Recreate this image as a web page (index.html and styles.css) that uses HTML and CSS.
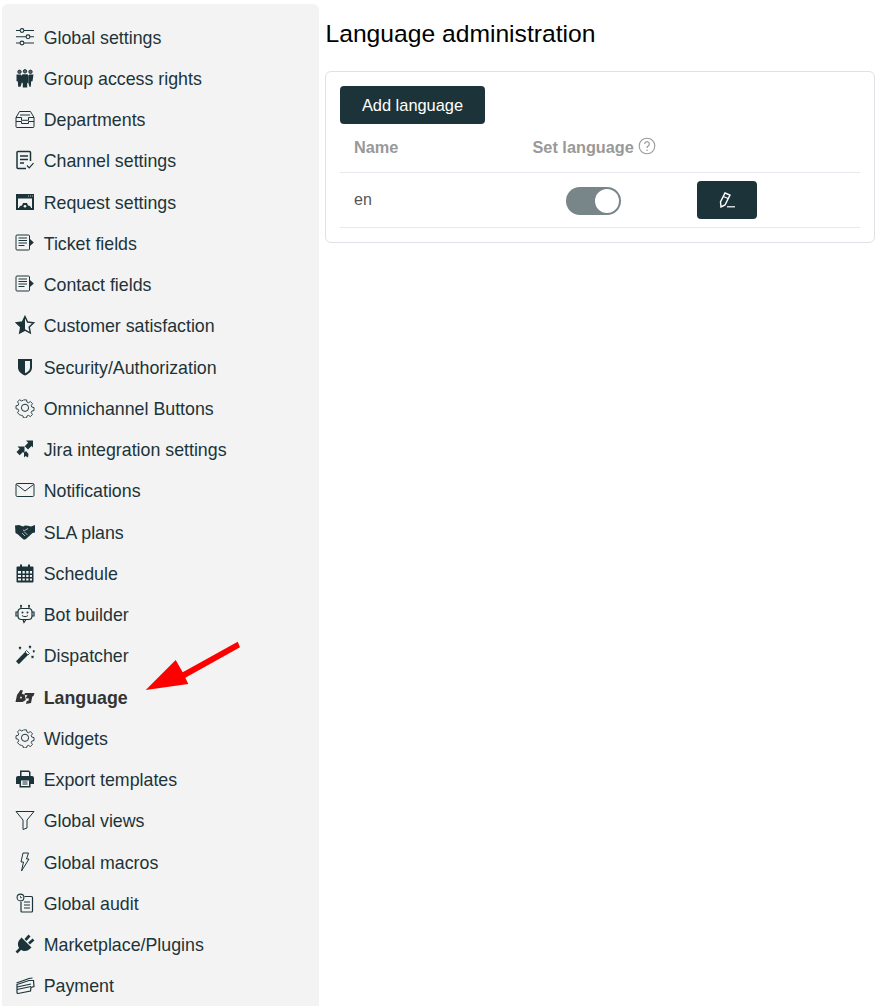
FILE: index.html
```html
<!doctype html>
<html>
<head>
    <meta charset="utf-8">
    <title>Language administration</title>
    <link rel="stylesheet" href="styles.css">
</head>
<body>
    <svg class="defs" width="0" height="0">
        <symbol id="i-sliders" viewBox="0 0 20 20">
            <path d="M1 3.500h4M9 3.500h10M1 9.800h10M15 9.800h4M1 16h4M9 16h10" fill="none" stroke="currentColor" stroke-width="1.100"/>
            <circle cx="7" cy="3.500" r="1.900" fill="none" stroke="currentColor" stroke-width="1.100"/>
            <circle cx="13" cy="9.800" r="1.900" fill="none" stroke="currentColor" stroke-width="1.100"/>
            <circle cx="7" cy="16" r="1.900" fill="none" stroke="currentColor" stroke-width="1.100"/>
        </symbol>
        <symbol id="i-group" viewBox="0 0 20 20">
            <circle cx="4.500" cy="3.800" r="1.700" fill="#56686c" stroke="currentColor"/>
            <circle cx="10" cy="3.300" r="1.700" fill="#56686c" stroke="currentColor"/>
            <circle cx="15.500" cy="3.800" r="1.700" fill="#56686c" stroke="currentColor"/>
            <path d="M1.500 6.500h4.200l1 1.500v7l-1.200 3.700H3.200l-.4-5.500H1.500zM18.500 6.500h-4.200l-1 1.500v7l1.200 3.700h1.300l.4-5.500h1.300zM7.500 6.300h5l1 1.500v6.500l-1.300 1v4.200H7.800v-4.200l-1.300-1V7.800z" fill="currentColor"/>
        </symbol>
        <symbol id="i-inbox" viewBox="0 0 20 20">
            <path d="M4.500 2.500h11l3.500 6v9a1 1 0 0 1-1 1H2a1 1 0 0 1-1-1v-9zM1 8.500h5.500v2.800h7V8.500H19M1 12.500h5.500v2h7v-2H19M5 6h10" fill="none" stroke="currentColor" stroke-width="1"/>
        </symbol>
        <symbol id="i-check-doc" viewBox="0 0 20 20">
            <path d="M11 18.500H3a1 1 0 0 1-1-1V2.500a1 1 0 0 1 1-1h11.500a1 1 0 0 1 1 1V11" fill="none" stroke="currentColor" stroke-width="1.500"/>
            <path d="M5 6h8M5 9.500h8M5 13h4" fill="none" stroke="currentColor" stroke-width="1.300"/>
            <path d="M12 15.500l2.200 2.300 4.300-4.600" fill="none" stroke="currentColor" stroke-width="1.200"/>
        </symbol>
        <symbol id="i-request" viewBox="0 0 20 20">
            <path fill-rule="evenodd" d="M1 2h18v16H1zM3 6.500v9.500h14V6.500z" fill="currentColor"/>
            <path d="M3.500 16.500l1.500-2.500 2-.5 1-2.500h4l1 2.500 2 .5 1.500 2.500z" fill="currentColor"/>
            <circle cx="10" cy="14.300" r="1.300" fill="#f3f3f3"/>
            <path d="M13 4h1M15 4h1M17 4h.8" stroke="#f3f3f3" stroke-width=".8"/>
        </symbol>
        <symbol id="i-fields" viewBox="0 0 20 20">
            <path d="M14.500 16V3a1 1 0 0 0-1-1H2a1 1 0 0 0-1 1v13a1 1 0 0 0 1 1h11.500a1 1 0 0 0 1-1z" fill="none" stroke="currentColor" stroke-width="1"/>
            <path d="M3.500 5h8.500M3.500 7.500h8.500M3.500 10h8.500M3.500 12.500h6" fill="none" stroke="currentColor" stroke-width="1.100"/>
            <path d="M15 6l3.800 3.500L15 13z" fill="currentColor"/>
        </symbol>
        <symbol id="i-star" viewBox="0 0 20 20">
            <path d="M10 1.500l2.600 5.500 6 .8-4.400 4.200 1.100 6L10 15.100 4.700 18l1.100-6-4.400-4.200 6-.8z" fill="none" stroke="currentColor" stroke-width="1.400"/>
            <path d="M10 1.500v13.600L4.700 18l1.100-6-4.400-4.200 6-.8z" fill="currentColor"/>
        </symbol>
        <symbol id="i-shield" viewBox="0 0 20 20">
            <path d="M3 2h14v8.500c0 4-3.500 6.500-7 8-3.500-1.500-7-4-7-8z" fill="currentColor"/>
            <path d="M10 4h5v6.500c0 2.800-2.300 4.600-5 5.800z" fill="#f3f3f3"/>
        </symbol>
        <symbol id="i-gear" viewBox="0 0 20 20">
            <path d="M8.300 1h3.400l.5 2.500 1.700.7 2.100-1.400 2.300 2.400-1.400 2.100.7 1.700 2.400.5v3.400l-2.400.5-.7 1.700 1.400 2.100-2.300 2.400-2.100-1.400-1.700.7-.5 2.100H8.300l-.5-2.100-1.700-.7L4 17.600l-2.300-2.400 1.400-2.100-.7-1.700L0 10.900V7.500l2.400-.5.700-1.700-1.400-2.100L4 .8l2.100 1.400 1.700-.7z" transform="translate(1 1) scale(.9)" fill="none" stroke="currentColor" stroke-width="1"/>
            <circle cx="10" cy="9.800" r="3.600" fill="none" stroke="currentColor" stroke-width="1"/>
        </symbol>
        <symbol id="i-jira" viewBox="0 0 20 20">
            <path d="M18 1.500h-7l2.200 2.200-3.500 3.500 3.300 3.300 3.500-3.500 1.500 1.500zM9.500 7.500h-7l2.200 2.200-3.200 3.300 3.200 3.200 3.300-3.300 1.500 1.500zM11 12l-2 2v4.500l1.500-1.500 2.500 1.500.5-3.500z" fill="currentColor"/>
        </symbol>
        <symbol id="i-mail" viewBox="0 0 20 20">
            <rect x="1" y="3.500" width="18" height="13" rx="1.200" fill="none" stroke="currentColor" stroke-width="1"/>
            <path d="M1.500 4.500L10 11l8.500-6.500" fill="none" stroke="currentColor" stroke-width="1"/>
        </symbol>
        <symbol id="i-hands" viewBox="0 0 20 20">
            <path d="M0 3.500l4-.5 4 1.500L10 3.500l3 .2 3 .8 4-1.500v7.500l-2.500.5-6.500 6-2 .8-2-1.500L3 12.500.5 11z" fill="currentColor"/>
            <path d="M13 6.500L9.500 8.500l-1.500-.5M7 11l3 3M9 9.500l3.500 3.500" fill="none" stroke="#f3f3f3" stroke-width=".7"/>
        </symbol>
        <symbol id="i-calendar" viewBox="0 0 20 20">
            <path fill-rule="evenodd" d="M2.500 3.500H5V1.500h2v2h6v-2h2v2h2.500a1 1 0 0 1 1 1v14a1 1 0 0 1-1 1h-15a1 1 0 0 1-1-1v-14a1 1 0 0 1 1-1zM3 8v2.500h3V8zm4.500 0v2.500h2.300V8zm3.700 0v2.500h2.300V8zm3.700 0v2.500H17V8zM3 12v2h3v-2zm4.500 0v2h2.300v-2zm3.700 0v2h2.300v-2zm3.700 0v2H17v-2zM3 15.500V17.500h3v-2zm4.500 0v2h2.300v-2zm3.700 0v2h2.300v-2zm3.700 0v2H17v-2z" fill="currentColor"/>
        </symbol>
        <symbol id="i-bot" viewBox="0 0 20 20">
            <rect x="3" y="4.500" width="14" height="11" rx="3.500" fill="none" stroke="currentColor" stroke-width="1.200"/>
            <path d="M6 4.500V2M14 4.500V2M3 8H1v4h2M17 8h2v4h-2M8 15.500l1 3 2-3" fill="none" stroke="currentColor" stroke-width="1.200"/>
            <circle cx="7.500" cy="8.500" r="1" fill="currentColor"/>
            <circle cx="12.500" cy="8.500" r="1" fill="currentColor"/>
            <circle cx="6" cy="1.800" r="1" fill="currentColor"/>
            <circle cx="14" cy="1.800" r="1" fill="currentColor"/>
            <path d="M7 11.500c1.500 1.500 4.500 1.500 6 0" fill="none" stroke="currentColor"/>
        </symbol>
        <symbol id="i-wand" viewBox="0 0 20 20">
            <path d="M1 16.300L11.500 5.500 14.500 8.500 3.800 19.300z" fill="currentColor"/>
            <path d="M11.500 5.500L14.500 8.500 13 10 10 7z" fill="#f3f3f3" stroke="currentColor" stroke-width=".8"/>
            <path d="M4 2l2 2M6 2L4 4M14 1l2 2M16 1l-2 2M16.500 11l2 2M18.500 11l-2 2M18 5.500l1.500 1.500M19.500 5.500L18 7" fill="none" stroke="currentColor" stroke-width="1.100"/>
        </symbol>
        <symbol id="i-sign" viewBox="0 0 20 20">
            <path d="M.5 15l1.500-7L5.500 3l2.500.5-1.200 3 3 1.500 1 5-3.300 2z" fill="currentColor"/>
            <path d="M5 10l1.300-.4.700 1.400-1.300.8z" fill="#f3f3f3"/>
            <path d="M10 6h9.500l-1 3-1.200.5-1.300 6.500-5 1 .8-3 1.700-.3.400-2.200-3.400-.3 2-3-3.300-.2z" fill="currentColor"/>
        </symbol>
        <symbol id="i-printer" viewBox="0 0 20 20">
            <path fill-rule="evenodd" d="M5 7V1.500h9L15.500 3v4H17a2 2 0 0 1 2 2v6h-3.500v3.500h-11V15H1V9a2 2 0 0 1 2-2zM6.500 3v4h7.500V3.500L13.500 3zM6 11.500v5.500h8v-5.500z" fill="currentColor"/>
            <path d="M7.500 13h5M7.500 15h5" stroke="currentColor" stroke-width="1"/>
        </symbol>
        <symbol id="i-funnel" viewBox="0 0 20 20">
            <path d="M1 1.500h18l-7 8.500v8l-4 1.500V10z" fill="none" stroke="currentColor" stroke-width="1"/>
        </symbol>
        <symbol id="i-bolt" viewBox="0 0 20 20">
            <path d="M8 1h5.500l-2 6h2.500l-7.500 12 2-9H6z" fill="none" stroke="currentColor" stroke-width="1"/>
        </symbol>
        <symbol id="i-audit" viewBox="0 0 20 20">
            <path d="M9.500 3.500h7a1 1 0 0 1 1 1v13.500a1 1 0 0 1-1 1H7a1 1 0 0 1-1-1V9" fill="none" stroke="currentColor" stroke-width="1.200"/>
            <path d="M9 9h6M9 12h6M9 15h6" stroke="currentColor" stroke-width="1.100"/>
            <circle cx="5.500" cy="4.500" r="3.400" fill="#f3f3f3" stroke="currentColor" stroke-width="1.100"/>
            <path d="M5.500 2.800v1.900h1.700" fill="none" stroke="currentColor" stroke-width=".8"/>
        </symbol>
        <symbol id="i-plug" viewBox="0 0 20 20">
            <path d="M6.500 3.500L16.500 13.500 13.500 16C10.500 18 7 17 5 15 3 13 2 9.500 4 6.500z" fill="currentColor"/>
            <path d="M10.500 6L14.500 1.500M14 9.500L18.500 5.500M6 14L1.500 18.500" fill="none" stroke="currentColor" stroke-width="2.700"/>
        </symbol>
        <symbol id="i-payment" viewBox="0 0 20 20">
            <path d="M2 9.500L14 5.500l4.500 0 .5 6-3 1-.5 3.500L3 18.500a1 1 0 0 1-1-1z" fill="none" stroke="currentColor" stroke-width="1.200"/>
            <path d="M1.500 8L14 3.500l3.500-.5M2 12l14-3M2 14.500l14-3" fill="none" stroke="currentColor" stroke-width="1.200"/>
        </symbol>
    </svg>

    <div class="page">
        <nav class="sidebar">
            <a class="side-item"><svg class="icon"><use href="#i-sliders"/></svg>Global settings</a>
            <a class="side-item"><svg class="icon"><use href="#i-group"/></svg>Group access rights</a>
            <a class="side-item"><svg class="icon"><use href="#i-inbox"/></svg>Departments</a>
            <a class="side-item"><svg class="icon"><use href="#i-check-doc"/></svg>Channel settings</a>
            <a class="side-item"><svg class="icon"><use href="#i-request"/></svg>Request settings</a>
            <a class="side-item"><svg class="icon"><use href="#i-fields"/></svg>Ticket fields</a>
            <a class="side-item"><svg class="icon"><use href="#i-fields"/></svg>Contact fields</a>
            <a class="side-item"><svg class="icon"><use href="#i-star"/></svg>Customer satisfaction</a>
            <a class="side-item"><svg class="icon"><use href="#i-shield"/></svg>Security/Authorization</a>
            <a class="side-item"><svg class="icon"><use href="#i-gear"/></svg>Omnichannel Buttons</a>
            <a class="side-item"><svg class="icon"><use href="#i-jira"/></svg>Jira integration settings</a>
            <a class="side-item"><svg class="icon"><use href="#i-mail"/></svg>Notifications</a>
            <a class="side-item"><svg class="icon"><use href="#i-hands"/></svg>SLA plans</a>
            <a class="side-item"><svg class="icon"><use href="#i-calendar"/></svg>Schedule</a>
            <a class="side-item"><svg class="icon"><use href="#i-bot"/></svg>Bot builder</a>
            <a class="side-item"><svg class="icon"><use href="#i-wand"/></svg>Dispatcher</a>
            <a class="side-item active"><svg class="icon"><use href="#i-sign"/></svg>Language</a>
            <a class="side-item"><svg class="icon"><use href="#i-gear"/></svg>Widgets</a>
            <a class="side-item"><svg class="icon"><use href="#i-printer"/></svg>Export templates</a>
            <a class="side-item"><svg class="icon"><use href="#i-funnel"/></svg>Global views</a>
            <a class="side-item"><svg class="icon"><use href="#i-bolt"/></svg>Global macros</a>
            <a class="side-item"><svg class="icon"><use href="#i-audit"/></svg>Global audit</a>
            <a class="side-item"><svg class="icon"><use href="#i-plug"/></svg>Marketplace/Plugins</a>
            <a class="side-item"><svg class="icon"><use href="#i-payment"/></svg>Payment</a>
        </nav>

        <main class="content">
            <h1 class="title">Language administration</h1>
            <div class="card">
                <button class="btn btn-add">Add language</button>
                <table class="lang-table">
                    <thead>
                        <tr>
                            <th class="col-name">Name</th>
                            <th class="col-set">
                                <span class="set-head">Set language
                                    <svg class="help" viewBox="0 0 18 18"><circle cx="9" cy="9" r="7.800" fill="none" stroke="currentColor" stroke-width="1.100"/><path d="M6.700 7a2.300 2.300 0 1 1 3.500 2c-.8.500-1.200 1-1.200 2" fill="none" stroke="currentColor" stroke-width="1.200"/><circle cx="9" cy="13.200" r=".8" fill="currentColor"/></svg>
                                </span>
                            </th>
                            <th></th>
                        </tr>
                    </thead>
                    <tbody>
                        <tr>
                            <td class="lang-name">en</td>
                            <td><span class="toggle"><span class="knob"></span></span></td>
                            <td>
                                <button class="btn btn-edit">
                                    <svg class="pen" viewBox="0 0 16 16"><path d="M6 1L11 3 6 13 2 15 1.500 10z" fill="none" stroke="currentColor" stroke-width="1.400"/><path d="M4.300 4.500l4.800 2" stroke="currentColor" stroke-width="1.100"/><path d="M8 14.800h8" stroke="currentColor" stroke-width="1.200"/></svg>
                                </button>
                            </td>
                        </tr>
                    </tbody>
                </table>
            </div>
        </main>
    </div>

    <svg class="arrow" viewBox="0 0 100 54"><path d="M1.700 50L31.700 20 38.700 32.300 93.700 1.700 96 7.300 41.300 37.700 44.300 44z" fill="#ff0000"/></svg>
</body>
</html>
```

FILE: styles.css
```css
html, body {
    margin: 0;
    height: 100%;
    overflow: hidden;
    background: #fff;
    font-family: "Liberation Sans", Arial, sans-serif;
}
.defs {
    position: absolute;
}
.page {
    display: flex;
    height: 100%;
    align-items: stretch;
}
.sidebar {
    width: 317px;
    margin: 4px 0 0 2px;
    padding: 13.55px 0 0 13px;
    box-sizing: border-box;
    background: #f3f3f3;
    border-radius: 6px 6px 0 0;
    overflow: hidden;
}
.side-item {
    display: flex;
    align-items: center;
    gap: 8.7px;
    height: 41.25px;
    font-size: 17.8px;
    color: #1c3439;
}
.side-item.active {
    font-weight: bold;
    color: #333;
}
.icon {
    width: 20px;
    height: 20px;
    flex: none;
    position: relative;
    top: -1.5px;
}
.content {
    flex: 1;
    padding: 0 12px 0 6px;
}
.title {
    margin: 18px 0 21px 0.5px;
    font-size: 24.65px;
    line-height: 32px;
    font-weight: normal;
    color: #000;
}
.card {
    padding: 14px;
    border: 1px solid #e0e0e6;
    border-radius: 6px;
    background: #fff;
}
.btn {
    display: block;
    border: 0;
    border-radius: 4px;
    background: #1c3439;
    color: #fff;
    font-family: inherit;
}
.btn-add {
    width: 145px;
    height: 38px;
    padding: 0;
    font-size: 16.4px;
}
.btn-edit {
    width: 60px;
    height: 38px;
    padding: 0;
}
.pen {
    display: block;
    width: 16px;
    height: 16px;
    margin: 0 auto;
}
.lang-table {
    width: 520px;
    table-layout: fixed;
    border-collapse: collapse;
    font-size: 16.3px;
}
.lang-table th {
    box-sizing: border-box;
    height: 48px;
    padding: 0 14px;
    text-align: left;
    font-weight: bold;
    color: #999;
    border-bottom: 1px solid #e8e8ee;
    white-space: nowrap;
}
.lang-table td {
    box-sizing: border-box;
    height: 55px;
    padding: 0 14px;
    font-size: 16px;
    color: #555;
    border-bottom: 1px solid #e8e8ee;
}
.col-name {
    width: 178.5px;
}
.col-set {
    width: 164.5px;
}
.set-head {
    display: flex;
    align-items: center;
    gap: 4px;
}
.help {
    flex: none;
    width: 18px;
    height: 18px;
    margin-top: -3px;
}
.toggle {
    display: block;
    width: 55px;
    height: 28px;
    margin: 2px 0 0 33px;
    border-radius: 14px;
    background: #78868a;
    position: relative;
}
.knob {
    position: absolute;
    right: 2px;
    top: 2px;
    width: 24px;
    height: 24px;
    border-radius: 50%;
    background: #fff;
}
.arrow {
    position: absolute;
    left: 144px;
    top: 640px;
    width: 100px;
    height: 54px;
}
```
